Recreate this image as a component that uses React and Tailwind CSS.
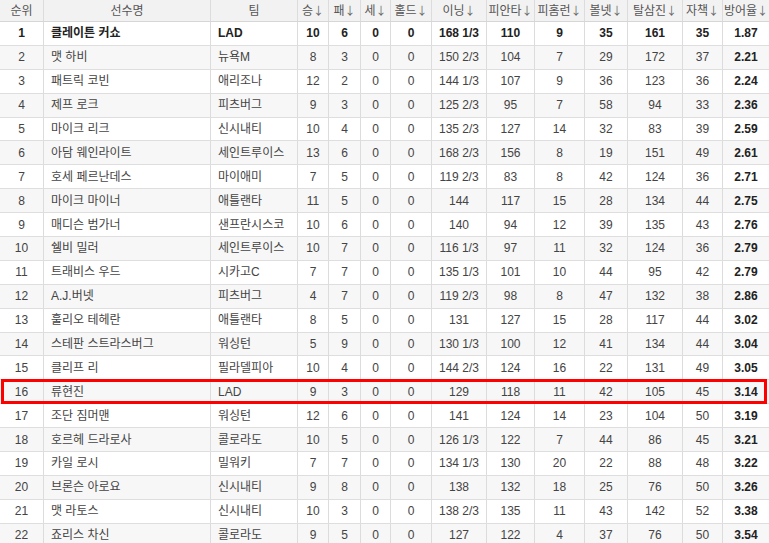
import React from "react";

const rows = [
  ["1", "클레이튼 커쇼", "LAD", "10", "6", "0", "0", "168 1/3", "110", "9", "35", "161", "35", "1.87"],
  ["2", "맷 하비", "뉴욕M", "8", "3", "0", "0", "150 2/3", "104", "7", "29", "172", "37", "2.21"],
  ["3", "패트릭 코빈", "애리조나", "12", "2", "0", "0", "144 1/3", "107", "9", "36", "123", "36", "2.24"],
  ["4", "제프 로크", "피츠버그", "9", "3", "0", "0", "125 2/3", "95", "7", "58", "94", "33", "2.36"],
  ["5", "마이크 리크", "신시내티", "10", "4", "0", "0", "135 2/3", "127", "14", "32", "83", "39", "2.59"],
  ["6", "아담 웨인라이트", "세인트루이스", "13", "6", "0", "0", "168 2/3", "156", "8", "19", "151", "49", "2.61"],
  ["7", "호세 페르난데스", "마이애미", "7", "5", "0", "0", "119 2/3", "83", "8", "42", "124", "36", "2.71"],
  ["8", "마이크 마이너", "애틀랜타", "11", "5", "0", "0", "144", "117", "15", "28", "134", "44", "2.75"],
  ["9", "매디슨 범가너", "샌프란시스코", "10", "6", "0", "0", "140", "94", "12", "39", "135", "43", "2.76"],
  ["10", "쉘비 밀러", "세인트루이스", "10", "7", "0", "0", "116 1/3", "97", "11", "32", "124", "36", "2.79"],
  ["11", "트래비스 우드", "시카고C", "7", "7", "0", "0", "135 1/3", "101", "10", "44", "95", "42", "2.79"],
  ["12", "A.J.버넷", "피츠버그", "4", "7", "0", "0", "119 2/3", "98", "8", "47", "132", "38", "2.86"],
  ["13", "훌리오 테헤란", "애틀랜타", "8", "5", "0", "0", "131", "127", "15", "28", "117", "44", "3.02"],
  ["14", "스테판 스트라스버그", "워싱턴", "5", "9", "0", "0", "130 1/3", "100", "12", "41", "134", "44", "3.04"],
  ["15", "클리프 리", "필라델피아", "10", "4", "0", "0", "144 2/3", "124", "16", "22", "131", "49", "3.05"],
  ["16", "류현진", "LAD", "9", "3", "0", "0", "129", "118", "11", "42", "105", "45", "3.14"],
  ["17", "조단 짐머맨", "워싱턴", "12", "6", "0", "0", "141", "124", "14", "23", "104", "50", "3.19"],
  ["18", "호르헤 드라로사", "콜로라도", "10", "5", "0", "0", "126 1/3", "122", "7", "44", "86", "45", "3.21"],
  ["19", "카일 로시", "밀워키", "7", "7", "0", "0", "134 1/3", "130", "20", "22", "88", "48", "3.22"],
  ["20", "브론슨 아로요", "신시내티", "9", "8", "0", "0", "138", "132", "18", "25", "76", "50", "3.26"],
  ["21", "맷 라토스", "신시내티", "10", "3", "0", "0", "138 2/3", "135", "11", "43", "142", "52", "3.38"],
  ["22", "죠리스 차신", "콜로라도", "9", "5", "0", "0", "127", "122", "4", "37", "76", "50", "3.54"],
];

// header labels; sortable ones get an arrow
const headers = [
  ["순위", false], ["선수명", false], ["팀", false], ["승", true], ["패", true], ["세", true], ["홀드", true],
  ["이닝", true], ["피안타", true], ["피홈런", true], ["볼넷", true], ["탈삼진", true], ["자책", true], ["방어율", true],
];

const grid =
  "grid grid-cols-[44px_167px_87px_31px_32px_30px_41px_55px_48px_50px_43px_55px_40px_46px]";

function Cell({ i, children, bold }) {
  const left = i === 1 || i === 2;
  return (
    <div
      className={
        "flex items-center overflow-hidden whitespace-nowrap border-[#dcdcdc] " +
        (i < 13 ? "border-r " : "") +
        (left ? "justify-start pl-[7px] " : "justify-center ") +
        (bold || i === 13 ? "font-bold text-[#222]" : "text-[#444]")
      }
    >
      {children}
    </div>
  );
}

export default function App() {
  return (
    <div className="w-[769px] h-[543px] overflow-hidden bg-white text-[12px] leading-none font-['Liberation_Sans','Noto_Sans_CJK_KR',sans-serif]">
      {/* header */}
      <div className={grid + " h-[22px] bg-[#f2f2f2] border-b border-[#d6d6d6]"}>
        {headers.map(([h, sort], i) => (
          <div
            key={h}
            className={
              "flex items-center justify-center text-[#555] border-[#dcdcdc] " + (i < 13 ? "border-r" : "")
            }
          >
            {h}
            {sort && <span className="font-['Noto_Sans_CJK_KR',sans-serif] text-[11px] text-[#666]">↓</span>}
          </div>
        ))}
      </div>

      {rows.map((r, idx) => (
        <div
          key={r[0]}
          className={
            grid +
            " relative h-[23.9px] border-b border-[#dedede] " +
            (idx % 2 === 1 ? "bg-[#f7f7f7]" : "bg-white")
          }
        >
          {r.map((v, i) => (
            <Cell key={i} i={i} bold={idx === 0}>
              {v}
            </Cell>
          ))}
          {r[0] === "16" && (
            <span className="absolute left-[1px] right-[2px] -top-[1px] -bottom-[1px] border-[3px] border-[#ff0000] pointer-events-none" />
          )}
        </div>
      ))}
    </div>
  );
}
